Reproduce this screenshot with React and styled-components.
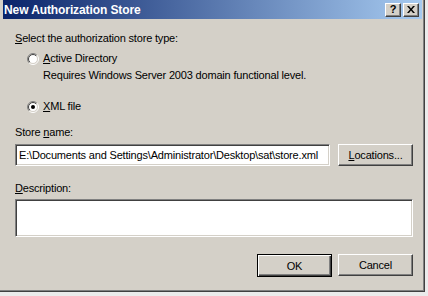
import React from "react";
import styled, { createGlobalStyle } from "styled-components";

const GlobalStyle = createGlobalStyle`
  html, body {
    margin: 0;
    padding: 0;
    background: #ebebeb;
  }
  body {
    font-family: "Liberation Sans", Arial, sans-serif;
    font-size: 11px;
    letter-spacing: -0.18px;
    color: #000;
  }
`;

const Window = styled.div`
  width: 425px;
  height: 292px;
  box-sizing: border-box;
  display: flex;
  flex-direction: column;
  background: #d4d0c8;
  padding: 0 2px 0 3px;
  border-right: 1px solid #404040;
  border-bottom: 1px solid #404040;
  box-shadow: inset -1px -1px #808080;
`;

const TitleBar = styled.div`
  height: 19px;
  flex: none;
  display: flex;
  align-items: center;
  justify-content: space-between;
  padding: 0 3px 0 1px;
  background: linear-gradient(to right, #0a246a, #a6caf0);
`;

const Title = styled.span`
  color: #fff;
  font-weight: bold;
  font-size: 12px;
  letter-spacing: -0.1px;
`;

const Caption = styled.div`
  display: flex;
  gap: 2px;
`;

const CaptionButton = styled.div`
  width: 16px;
  height: 14px;
  box-sizing: border-box;
  display: flex;
  align-items: center;
  justify-content: center;
  background: #d4d0c8;
  border: 1px solid;
  border-color: #fff #404040 #404040 #fff;
  box-shadow: inset -1px -1px #808080;
  font-weight: bold;
  font-size: 11px;
  line-height: 1;
`;

const Body = styled.div`
  flex: 1;
  display: flex;
  flex-direction: column;
  padding: 0 9px 0 12px;
`;

const Label = styled.div`
  line-height: 13px;
  height: 13px;
  margin-top: ${(p) => p.$top}px;
  padding-left: ${(p) => p.$indent || 0}px;
  white-space: nowrap;
`;

const RadioRow = styled.label`
  display: flex;
  align-items: center;
  gap: 4px;
  height: 13px;
  line-height: 13px;
  margin-top: ${(p) => p.$top}px;
  padding-left: 12px;
`;

const FieldRow = styled.div`
  display: flex;
  gap: 8px;
  margin-top: ${(p) => p.$top}px;
`;

const Sunken = styled.div`
  box-sizing: border-box;
  background: #fff;
  border: 1px solid;
  border-color: #808080 #fff #fff #808080;
  box-shadow: inset 1px 1px #404040, inset -1px -1px #d4d0c8;
`;

const TextBox = styled(Sunken)`
  width: 315px;
  height: 22px;
  display: flex;
  align-items: center;
  padding-left: 3px;
  white-space: nowrap;
  overflow: hidden;
`;

const TextArea = styled(Sunken)`
  height: 38px;
  margin-top: ${(p) => p.$top}px;
`;

const Button = styled.div`
  width: 75px;
  height: ${(p) => (p.$default ? 23 : 22)}px;
  box-sizing: border-box;
  display: flex;
  align-items: center;
  justify-content: center;
  background: #d4d0c8;
  border: 1px solid;
  border-color: #fff #404040 #404040 #fff;
  box-shadow: inset -1px -1px #808080;
  ${(p) =>
    p.$default &&
    `
    border-color: #000;
    box-shadow: inset 1px 1px #fff, inset -1px -1px #404040, inset -2px -2px #808080;
  `}
`;

const ButtonRow = styled.div`
  display: flex;
  justify-content: flex-end;
  align-items: flex-start;
  gap: 6px;
  margin-top: 17px;
`;

const Radio = ({ checked }) => (
  <svg width="12" height="12" viewBox="0 0 12 12">
    <defs>
      <linearGradient id="rOuter" x1="0" y1="0" x2="1" y2="1">
        <stop offset="0.45" stopColor="#808080" />
        <stop offset="0.55" stopColor="#ffffff" />
      </linearGradient>
      <linearGradient id="rInner" x1="0" y1="0" x2="1" y2="1">
        <stop offset="0.45" stopColor="#404040" />
        <stop offset="0.55" stopColor="#d4d0c8" />
      </linearGradient>
    </defs>
    <circle cx="6" cy="6" r="5.5" fill="none" stroke="url(#rOuter)" />
    <circle cx="6" cy="6" r="4.5" fill="#fff" stroke="url(#rInner)" />
    {checked && <circle cx="6" cy="6" r="2" fill="#000" />}
  </svg>
);

const CloseGlyph = () => (
  <svg width="8" height="7" viewBox="0 0 8 7">
    <path d="M0 0h2l2 2.5L6 0h2L5 3.5 8 7H6L4 4.5 2 7H0l3-3.5z" fill="#000" />
  </svg>
);

export default function App() {
  return (
    <>
      <GlobalStyle />
      <Window>
        <TitleBar>
          <Title>New Authorization Store</Title>
          <Caption>
            <CaptionButton>?</CaptionButton>
            <CaptionButton>
              <CloseGlyph />
            </CaptionButton>
          </Caption>
        </TitleBar>
        <Body>
          <Label $top={13}>
            <u>S</u>elect the authorization store type:
          </Label>
          <RadioRow $top={7}>
            <Radio />
            <span>
              <u>A</u>ctive Directory
            </span>
          </RadioRow>
          <Label $top={4} $indent={28}>
            Requires Windows Server 2003 domain functional level.
          </Label>
          <RadioRow $top={18}>
            <Radio checked />
            <span>
              <u>X</u>ML file
            </span>
          </RadioRow>
          <Label $top={13}>
            Store <u>n</u>ame:
          </Label>
          <FieldRow $top={5}>
            <TextBox>
              E:\Documents and Settings\Administrator\Desktop\sat\store.xml
            </TextBox>
            <Button>
              <span>
                <u>L</u>ocations...
              </span>
            </Button>
          </FieldRow>
          <Label $top={16}>
            <u>D</u>escription:
          </Label>
          <TextArea $top={4} />
          <ButtonRow>
            <Button $default>OK</Button>
            <Button>Cancel</Button>
          </ButtonRow>
        </Body>
      </Window>
    </>
  );
}
